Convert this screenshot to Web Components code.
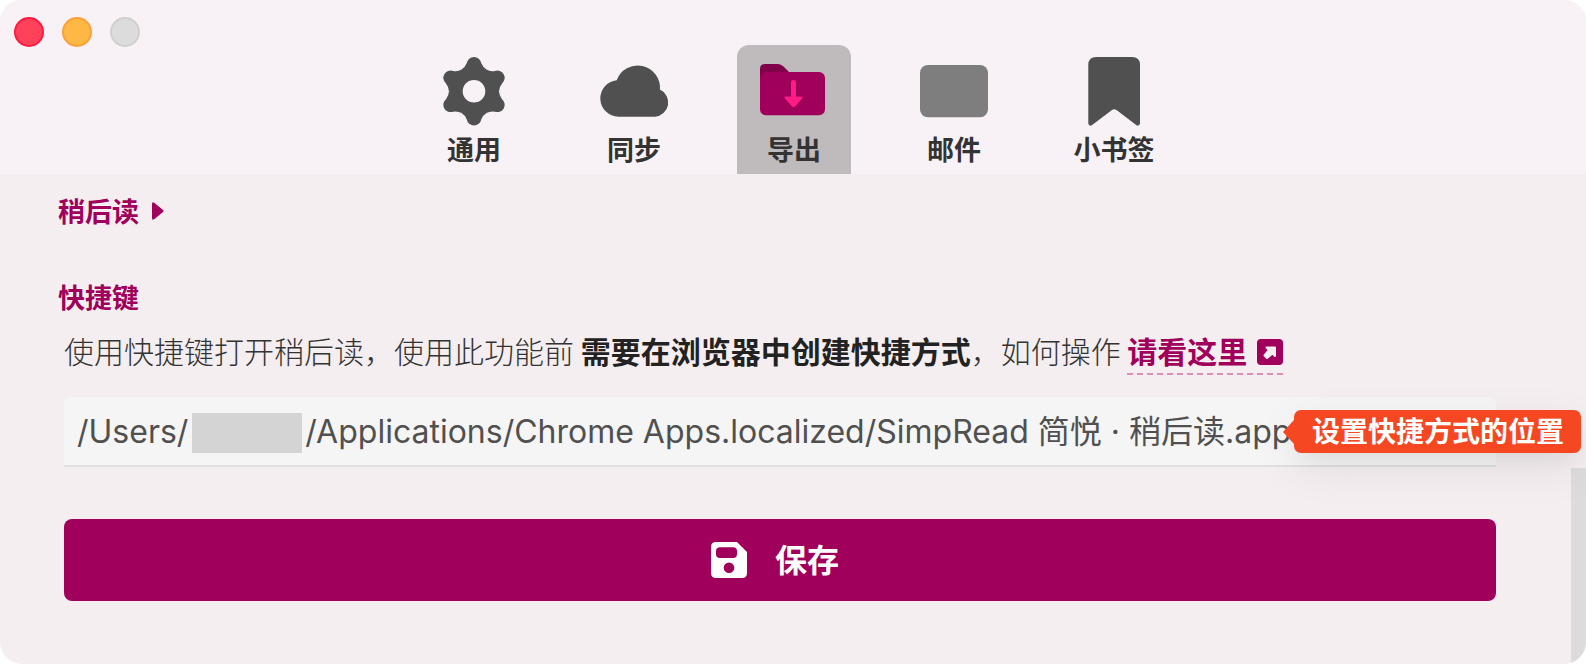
<!DOCTYPE html>
<html lang="zh-CN">
<head>
<meta charset="utf-8">
<title>导出</title>
<style>
  body {
    margin: 0;
    background: #fff;
    font-family: Inter, "Noto Sans CJK SC", sans-serif;
    --accent: #a0005b;
    --accent-dark: #7f0048;
    --header-bg: #f8f1f6;
    --page-bg: #f4eef0;
  }
</style>
</head>
<body>
<app-window>
  <window-lights slot="lights"></window-lights>
  <tab-bar slot="tabs">
    <tab-item icon="gear">通用</tab-item>
    <tab-item icon="cloud">同步</tab-item>
    <tab-item icon="folder" selected>导出</tab-item>
    <tab-item icon="mail">邮件</tab-item>
    <tab-item icon="bookmark">小书签</tab-item>
  </tab-bar>
  <section-title arrow>稍后读</section-title>
  <section-title>快捷键</section-title>
  <shortcut-hint></shortcut-hint>
  <path-field tip="设置快捷方式的位置"></path-field>
  <save-button>保存</save-button>
</app-window>

<template id="app-window">
  <div class="window">
    <header>
      <slot name="lights"></slot>
      <slot name="tabs"></slot>
    </header>
    <div class="body">
      <main><slot></slot></main>
      <div class="scrollbar"><div class="thumb"></div></div>
    </div>
  </div>
  <style>
    :host {
      display: block;
    }
    .window {
      display: flex;
      flex-direction: column;
      min-height: 100vh;
      border-radius: 22px;
      overflow: hidden;
      background: var(--page-bg);
    }
    header {
      display: grid;
      grid-template-columns: 1fr auto 1fr;
      align-items: start;
      background: var(--header-bg);
    }
    .body {
      flex: 1;
      display: flex;
    }
    main {
      flex: 1;
      min-width: 0;
      display: flex;
      flex-direction: column;
      padding: 17px 75px 24px 58px;
    }
    .scrollbar {
      width: 15px;
      display: flex;
      flex-direction: column;
      justify-content: flex-end;
    }
    .thumb {
      height: 40%;
      background: #dcdcdc;
    }
  </style>
</template>

<template id="window-lights">
  <button class="close" aria-label="关闭"></button>
  <button class="minimize" aria-label="最小化"></button>
  <button class="zoom" aria-label="缩放" disabled></button>
  <style>
    :host {
      display: flex;
      gap: 18px;
      padding: 17px 14px;
    }
    button {
      width: 30px;
      height: 30px;
      padding: 0;
      border-radius: 50%;
      border: 2px solid;
    }
    .close {
      background: #ff415a;
      border-color: #ff1a3e;
    }
    .minimize {
      background: #ffb845;
      border-color: #fb9f36;
    }
    .zoom {
      background: #dcdcdc;
      border-color: #cfcfcd;
    }
  </style>
</template>

<template id="tab-bar">
  <nav><slot></slot></nav>
  <style>
    :host {
      display: block;
      padding: 45px 0 0 2px;
    }
    nav {
      display: flex;
      gap: 46px;
    }
  </style>
</template>

<template id="tab-item">
  <button>
    <span class="icon"></span>
    <span class="label"><slot></slot></span>
  </button>
  <style>
    :host {
      display: block;
    }
    button {
      display: flex;
      flex-direction: column;
      align-items: center;
      gap: 4px;
      width: 114px;
      padding: 10px 0 7px;
      border: 0;
      border-radius: 12px 12px 0 0;
      background: none;
      color: #333;
      font: bold 27px/36px "Noto Sans CJK SC", sans-serif;
    }
    :host([selected]) button {
      background: #bfbabc;
    }
    svg {
      display: block;
      width: 72px;
      height: 72px;
    }
    .label {
      white-space: nowrap;
    }
  </style>
</template>

<template id="section-title">
  <h2>
    <slot></slot>
    <svg width="12" height="18" viewBox="0 0 12 18"><path d="M0 2Q0-1 2.500 1L11 8Q12 9 11 10L2.500 17Q0 19 0 16Z" fill="currentColor"/></svg>
  </h2>
  <style>
    :host {
      display: block;
      margin-bottom: 46px;
    }
    :host(:not([arrow])) {
      margin-bottom: 11px;
    }
    h2 {
      display: flex;
      align-items: center;
      gap: 13px;
      margin: 0;
      color: var(--accent);
      font: bold 27px/40px "Noto Sans CJK SC", sans-serif;
    }
    svg {
      display: none;
    }
    :host([arrow]) svg {
      display: block;
    }
  </style>
</template>

<template id="shortcut-hint">
  <p>使用快捷键打开稍后读，使用此功能前 <b>需要在浏览器中创建快捷方式</b>，如何操作 <a href="#shortcut">请看这里<svg width="26" height="26" viewBox="0 0 26 26"><rect width="26" height="26" rx="4" fill="currentColor"/><path d="M9.500 8.500H18V17L15.500 14.500L10 19L7.500 16.500L12 11Z" fill="#f4eef0" stroke="#f4eef0" stroke-width="2" stroke-linejoin="round"/></svg></a></p>
  <style>
    :host {
      display: block;
      padding-left: 6px;
      margin-bottom: 22px;
    }
    p {
      margin: 0;
      color: #333;
      font: 300 30px/44px "Noto Sans CJK SC", sans-serif;
    }
    b {
      color: #222;
      font-weight: bold;
    }
    a {
      display: inline-flex;
      align-items: center;
      gap: 10px;
      padding-bottom: 2px;
      color: var(--accent);
      font-weight: bold;
      line-height: 42px;
      text-decoration: none;
      border-bottom: 2px dashed #dd8db6;
    }
    a svg {
      margin-top: 4px;
    }
  </style>
</template>

<template id="path-field">
  <div class="field">
    <input type="text" aria-label="快捷方式的位置" value="/Users/             /Applications/Chrome Apps.localized/SimpRead 简悦 · 稍后读.app">
    <span class="cover"></span>
    <span class="tip" role="tooltip"></span>
  </div>
  <style>
    :host {
      display: block;
      padding-left: 6px;
      margin-bottom: 52px;
    }
    .field {
      position: relative;
    }
    input {
      display: block;
      box-sizing: border-box;
      width: 100%;
      height: 70px;
      padding: 0 13px 4px;
      border: 0;
      border-bottom: 2px solid #dfe0e0;
      border-radius: 8px 8px 0 0;
      outline: 0;
      background: #f5f5f5;
      color: #505050;
      font: 32px Inter, "Noto Sans CJK SC", sans-serif;
    }
    /* hides the account name in the path */
    .cover {
      position: absolute;
      left: 128px;
      top: 16px;
      width: 110px;
      height: 40px;
      background: #d4d4d4;
    }
    .tip {
      position: absolute;
      right: -85px;
      top: 13px;
      padding: 0 17px 2px 18px;
      border-radius: 7px;
      background: #f54721;
      color: #fff;
      font: bold 28px/41px "Noto Sans CJK SC", sans-serif;
      white-space: nowrap;
      box-shadow: 0 14px 45px rgba(0, 0, 0, 0.08), 0 12px 20px -6px rgba(0, 0, 0, 0.05);
    }
    .tip::before {
      content: "";
      position: absolute;
      right: 100%;
      top: 10px;
      border: solid transparent;
      border-width: 12px 11px 12px 0;
      border-right-color: #f54721;
    }
  </style>
</template>

<template id="save-button">
  <button>
    <svg width="36" height="36" viewBox="0 0 36 36"><path fill="#fff" fill-rule="evenodd" d="M5 0H26L36 10V31Q36 36 31 36H5Q0 36 0 31V5Q0 0 5 0ZM9 5.300Q5 5.300 5 9.300V12Q5 16 9 16H22Q26 16 26 12V9.300Q26 5.300 22 5.300ZM18 20.500A5.300 5.300 0 1 0 18 31.100A5.300 5.300 0 1 0 18 20.500Z"/></svg>
    <span><slot></slot></span>
  </button>
  <style>
    :host {
      display: block;
      padding-left: 6px;
    }
    button {
      display: flex;
      align-items: center;
      justify-content: center;
      gap: 28px;
      width: 100%;
      height: 82px;
      padding: 0 16px 0 6px;
      border: 0;
      border-radius: 8px;
      background: var(--accent);
      color: #fff;
      font: bold 32px/48px "Noto Sans CJK SC", sans-serif;
    }
    span {
      padding-bottom: 4px;
    }
  </style>
</template>

<script>
  const tooth = "M-10-17L-12.500-21.700Q-9-23.700-7.200-28.200A7.300 7.300 0 0 1 7.200-28.200Q9-23.700 12.500-21.700L10-17Z";

  const icons = {
    gear: `
      <g transform="translate(36 36.300)" fill="#505050">
        ${[0, 60, 120, 180, 240, 300].map((a) => `<path d="${tooth}" transform="rotate(${a})"/>`).join("")}
        <circle r="17.600" fill="none" stroke="#505050" stroke-width="12.600"/>
      </g>`,
    cloud: `<path fill="#505050" d="M20.500 61.700A18.300 18.300 0 0 1 18.700 25.200A22.300 22.300 0 0 1 61.900 34.600A14.200 14.200 0 0 1 57 61.700Z"/>`,
    folder: `
      <path fill="var(--accent-dark)" d="M2 40V14Q2 9 7 9H20Q23 9 25.500 11.500L32 18V40Z"/>
      <rect x="2" y="17" width="65" height="43.300" rx="6" fill="var(--accent)"/>
      <path fill="#ff1b84" d="M33 27.500A2.500 2.500 0 0 1 38 27.500V41.500H43Q45.500 41.500 44 43.500L37 51.500Q35.500 53 34 51.500L27 43.500Q25.500 41.500 28 41.500H33Z"/>`,
    mail: `<rect x="2" y="10" width="68" height="52.300" rx="8" fill="#7e7e7e"/>`,
    bookmark: `<path fill="#505050" d="M10.300 10Q10.300 2 18.300 2H54Q62 2 62 10V68.500Q61.500 71.500 58.500 70.300L38.500 55Q36.200 53.500 34 55L13.800 70.300Q10.800 71.500 10.300 68.500Z"/>`,
  };

  class TemplateElement extends HTMLElement {
    constructor() {
      super();
      const template = document.getElementById(this.localName);
      this.attachShadow({ mode: "open" });
      this.shadowRoot.appendChild(template.content.cloneNode(true));
    }
  }

  class AppWindow extends TemplateElement {}
  class WindowLights extends TemplateElement {}
  class TabBar extends TemplateElement {}
  class SectionTitle extends TemplateElement {}
  class ShortcutHint extends TemplateElement {}
  class SaveButton extends TemplateElement {}

  class TabItem extends TemplateElement {
    connectedCallback() {
      const icon = icons[this.getAttribute("icon")];
      this.shadowRoot.querySelector(".icon").innerHTML =
        `<svg viewBox="0 0 72 72" aria-hidden="true">${icon}</svg>`;
    }
  }

  class PathField extends TemplateElement {
    connectedCallback() {
      this.shadowRoot.querySelector(".tip").textContent = this.getAttribute("tip");
    }
  }

  customElements.define("app-window", AppWindow);
  customElements.define("window-lights", WindowLights);
  customElements.define("tab-bar", TabBar);
  customElements.define("tab-item", TabItem);
  customElements.define("section-title", SectionTitle);
  customElements.define("shortcut-hint", ShortcutHint);
  customElements.define("path-field", PathField);
  customElements.define("save-button", SaveButton);
</script>
</body>
</html>
